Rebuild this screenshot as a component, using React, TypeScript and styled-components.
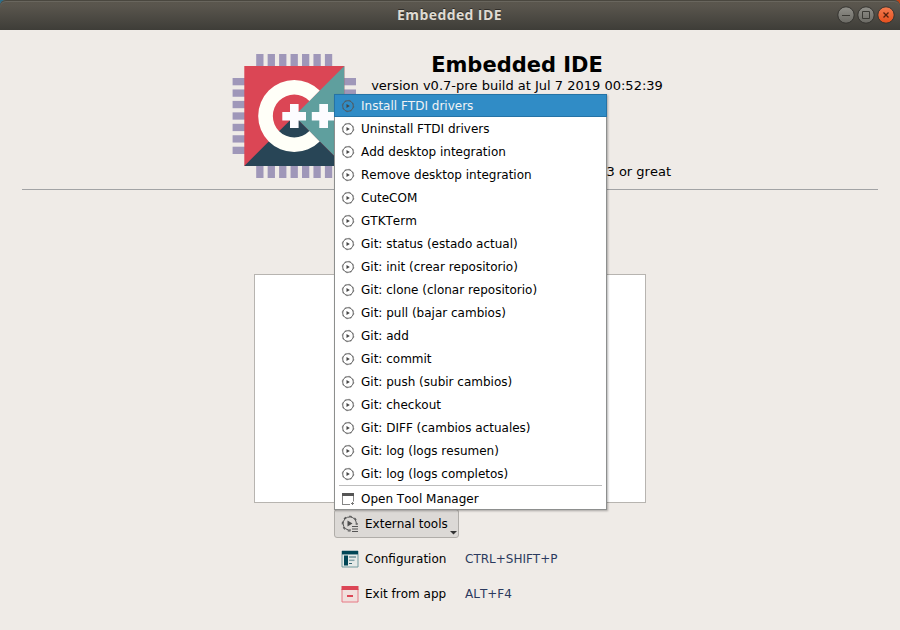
import React from 'react';
import styled, { createGlobalStyle } from 'styled-components';

const GlobalStyle = createGlobalStyle`
  * { box-sizing: border-box; }
  html, body { margin: 0; padding: 0; }
  body {
    background: #efebe7;
    font-family: "DejaVu Sans", sans-serif;
    font-size: 12px;
    font-kerning: none;
    color: #000;
    overflow: hidden;
  }
`;

const Window = styled.div`
  width: 900px;
  height: 630px;
  display: flex;
  flex-direction: column;
  background: #efebe7;
`;

const Desktop = styled.div`
  flex: none;
  background: linear-gradient(90deg, #2f6d87 50%, #c34113 50%);
`;

const TitleBar = styled.header`
  height: 30px;
  display: grid;
  grid-template-columns: 1fr auto 1fr;
  align-items: center;
  padding-right: 5px;
  padding-left: 4px;
  border-radius: 6px 6px 0 0;
  background: linear-gradient(#5b574e 0, #59554d 6px, #3e3d38 30px);
  box-shadow: inset 0 1px 0 #4a473f, inset 0 2px 0 #69665e;
`;

const WindowTitle = styled.div`
  grid-column: 2;
  font: bold 14px/30px "Open Sans", "Noto Sans", sans-serif;
  letter-spacing: 0.4px;
  color: #dfdbd2;
  text-shadow: 0 -1px 0 #2f2d29;
`;

const Controls = styled.div`
  justify-self: end;
  display: flex;
  gap: 2px;
`;

const Header = styled.section`
  flex: none;
  height: 160px;
  margin: 0 22px;
  padding: 24px 0 0 210px;
  display: flex;
  gap: 15px;
  border-bottom: 1px solid #a2a3a5;
`;

const Info = styled.div`
  width: 300px;
  display: flex;
  flex-direction: column;
  align-items: center;
  white-space: nowrap;
`;

const ProductName = styled.h1`
  margin: -3px 0 0 -8px;
  font-size: 21px;
  line-height: 28px;
  font-weight: bold;
`;

const Version = styled.div`
  margin: -1px 0 0 -8px;
  font-size: 13px;
  line-height: 16px;
`;

const License = styled.div`
  margin-top: 70px;
  align-self: flex-end;
  font-size: 13px;
  line-height: 16px;
`;

const Content = styled.main`
  flex: 1;
  display: flex;
  flex-direction: column;
  padding: 84px 254px 0;
`;

const ProjectList = styled.div`
  height: 229px;
  background: #fff;
  border: 1px solid #b7b4b0;
`;

const Actions = styled.div`
  display: grid;
  grid-template-columns: 125px auto;
  grid-auto-rows: 29px;
  row-gap: 6px;
  column-gap: 6px;
  margin: 6px 0 0 80px;
`;

const ToolAnchor = styled.div`
  position: relative;
  grid-column: 1;
`;

const ActionButton = styled.button<{ $pressed?: boolean }>`
  grid-column: 1;
  width: 125px;
  height: 29px;
  display: flex;
  align-items: center;
  gap: 6px;
  padding: 0 0 0 6px;
  font: inherit;
  font-kerning: none;
  color: #000;
  white-space: nowrap;
  border: 1px solid ${p => (p.$pressed ? '#b0ada9' : 'transparent')};
  border-radius: 3px;
  background: ${p => (p.$pressed ? '#dcd9d6' : 'transparent')};
`;

const Arrow = styled.svg`
  position: absolute;
  right: 2px;
  bottom: 3px;
`;

const Shortcut = styled.div`
  grid-column: 2;
  line-height: 31px;
  color: #2b3a5e;
`;

const Menu = styled.ul`
  position: absolute;
  left: 0;
  bottom: 28px;
  z-index: 2;
  width: 273px;
  height: 416px;
  margin: 0;
  padding: 0;
  list-style: none;
  background: #fff;
  border: 1px solid #8d8f8e;
  box-shadow: 1px 1px 2px rgba(0, 0, 0, 0.3);
`;

const MenuItem = styled.li<{ $active?: boolean }>`
  height: 23px;
  display: flex;
  align-items: center;
  gap: 6px;
  padding-left: 6px;
  margin: 0 -1px;
  border: 1px solid ${p => (p.$active ? '#2573a6' : 'transparent')};
  background: ${p => (p.$active ? '#308cc6' : 'transparent')};
  color: ${p => (p.$active ? '#f0f3f5' : '#000')};
  white-space: nowrap;

  &:first-child { margin-top: -1px; }
`;

const Separator = styled.li`
  height: 1px;
  margin: 0 4px 1px;
  background: #bdbdbd;
`;

const WindowButton = ({ kind }: { kind: 'min' | 'max' | 'close' }) => {
  const close = kind === 'close';
  return (
    <svg width="18" height="18" viewBox="0 0 18 18">
      <defs>
        <linearGradient id={`face-${kind}`} x1="0" y1="0" x2="0" y2="1">
          <stop offset="0" stopColor={close ? '#f37c50' : '#91908a'} />
          <stop offset="1" stopColor={close ? '#e64f1d' : '#6a6963'} />
        </linearGradient>
      </defs>
      <circle cx="9" cy="9" r="8.2" fill={`url(#face-${kind})`} stroke="#34332f" />
      {kind === 'min' && <path d="M5 9.5h8" stroke="#3b3a35" />}
      {kind === 'max' && <path d="M5.5 5.5h7v7h-7z" fill="none" stroke="#3b3a35" />}
      {close && <path d="M6.5 6.5l5 5m0-5l-5 5" stroke="#54210e" strokeWidth="1.3" />}
    </svg>
  );
};

const pins = [0, 1, 2, 3, 4, 5, 6].map(i => 24 + i * 11.45);

const Logo = () => (
  <svg width="124" height="124" viewBox="0 0 124 124">
    <g fill="#9f97b9">
      {pins.map(p => (
        <React.Fragment key={p}>
          <rect x={p + 0.2} y="0" width="7.3" height="124" />
          <rect x="0.6" y={p} width="123.4" height="7.3" />
        </React.Fragment>
      ))}
    </g>
    <rect x="12.3" y="12" width="100" height="100" fill="#db4655" />
    <path d="M112.3 12v100l-50-50z" fill="#5f9f9e" />
    <path d="M12.3 112h100l-50-50z" fill="#284556" />
    <path d="M87.7 36.6A36 36 0 1 0 87.7 87.4L77.4 77.1A21.4 21.4 0 1 1 77.4 46.9Z" fill="#fffff8" />
    <path
      d="M58 50h8.6v8H74v8.6h-7.4v7.4H58v-7.4h-7.7V58H58zM87.3 50h8.7v8h8v8.6h-8v7.4h-8.7v-7.4h-7.5V58h7.5z"
      fill="#fcfcff"
    />
  </svg>
);

const PlayIcon = () => (
  <svg width="14" height="14" viewBox="0 0 14 14">
    <circle cx="7" cy="7" r="5.3" fill="none" stroke="#555" strokeWidth="0.9" />
    <circle cx="7" cy="7" r="5.8" fill="none" stroke="#555" strokeWidth="0.5" strokeDasharray="2.2 2.35" />
    <path d="M5.5 4.9v4.2L8.8 7z" fill="#454545" />
  </svg>
);

const ManagerIcon = () => (
  <svg width="14" height="14" viewBox="0 0 14 14">
    <path d="M1.5 12.5V2M12.5 2v7.5M1 12.5h8" fill="none" stroke="#858585" />
    <path d="M1 1h12v3H1z" fill="#555" />
    <path d="M11.5 10v3M10 11.5h3" stroke="#777" />
  </svg>
);

const ToolsIcon = () => (
  <svg width="18" height="18" viewBox="0 0 18 18">
    <path
      d="M10 15A6.6 6.6 0 1 1 15.2 9.8"
      fill="none" stroke="#555" strokeWidth="1"
    />
    <path
      d="M9.5 16A7.4 7.4 0 1 1 16 9.8"
      fill="none" stroke="#555" strokeWidth="1.1" strokeDasharray="2.8 3"
    />
    <path d="M6.5 5.5v6L11.5 8.5z" fill="#4d4d4d" />
    <path d="M11 11.5h6M11 14h6M11 16.5h6" stroke="#555" />
  </svg>
);

const ConfigIcon = () => (
  <svg width="18" height="18" viewBox="0 0 18 18">
    <path d="M1 4h16v13H1z" fill="#e5e9e7" stroke="#719a9f" />
    <path d="M1 1h16v3H1z" fill="#004656" stroke="#004656" strokeWidth="0.5" />
    <path d="M3 5.5h4v10H3z" fill="#004656" />
    <path d="M8 7h7M8 13.5h3" stroke="#32636f" />
    <path d="M8 10.3h5.5" stroke="#83a4aa" strokeWidth="1.5" />
  </svg>
);

const ExitIcon = () => (
  <svg width="18" height="18" viewBox="0 0 18 18">
    <path d="M1 4h16v13H1z" fill="#f1dfdd" stroke="#e77984" />
    <path d="M.5 1h17v4H.5z" fill="#dc4656" />
    <path d="M6 11h6" stroke="#dc4656" strokeWidth="2" />
  </svg>
);

const tools = [
  'Install FTDI drivers',
  'Uninstall FTDI drivers',
  'Add desktop integration',
  'Remove desktop integration',
  'CuteCOM',
  'GTKTerm',
  'Git: status (estado actual)',
  'Git: init (crear repositorio)',
  'Git: clone (clonar repositorio)',
  'Git: pull (bajar cambios)',
  'Git: add',
  'Git: commit',
  'Git: push (subir cambios)',
  'Git: checkout',
  'Git: DIFF (cambios actuales)',
  'Git: log (logs resumen)',
  'Git: log (logs completos)',
];

export default function App() {
  return (
    <>
      <GlobalStyle />
      <Window>
        <Desktop>
          <TitleBar>
            <WindowTitle>Embedded IDE</WindowTitle>
            <Controls>
              <WindowButton kind="min" />
              <WindowButton kind="max" />
              <WindowButton kind="close" />
            </Controls>
          </TitleBar>
        </Desktop>
        <Header>
          <Logo />
          <Info>
            <ProductName>Embedded IDE</ProductName>
            <Version>version v0.7-pre build at Jul 7 2019 00:52:39</Version>
            <License>3 or great</License>
          </Info>
        </Header>
        <Content>
          <ProjectList />
          <Actions>
            <ToolAnchor>
              <ActionButton $pressed>
                <ToolsIcon />
                External tools
              </ActionButton>
              <Arrow width="7" height="4" viewBox="0 0 7 4">
                <path d="M0 0h7L3.5 3.5z" fill="#333" />
              </Arrow>
              <Menu>
                {tools.map((name, i) => (
                  <MenuItem key={name} $active={i === 0}>
                    <PlayIcon />
                    {name}
                  </MenuItem>
                ))}
                <Separator />
                <MenuItem>
                  <ManagerIcon />
                  Open Tool Manager
                </MenuItem>
              </Menu>
            </ToolAnchor>
            <ActionButton>
              <ConfigIcon />
              Configuration
            </ActionButton>
            <Shortcut>CTRL+SHIFT+P</Shortcut>
            <ActionButton>
              <ExitIcon />
              Exit from app
            </ActionButton>
            <Shortcut>ALT+F4</Shortcut>
          </Actions>
        </Content>
      </Window>
    </>
  );
}
